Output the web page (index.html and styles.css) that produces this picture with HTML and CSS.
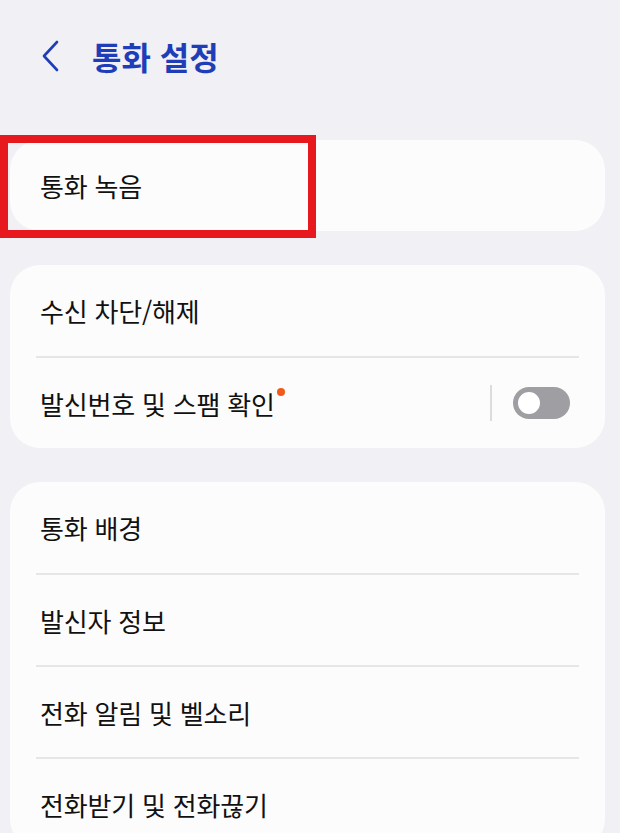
FILE: index.html
```html
<!DOCTYPE html>
<html lang="ko">
<head>
    <meta charset="UTF-8">
    <meta name="viewport" content="width=device-width, initial-scale=1.0">
    <title>통화 설정</title>
    <link rel="stylesheet" href="styles.css">
</head>
<body>
    <div class="header">
        <svg class="back" width="18" height="32" viewBox="0 0 18 32">
            <path d="M15 2 L2 16 L15 30" fill="none" stroke="#1f3db8" stroke-width="2.6" stroke-linecap="round" stroke-linejoin="round"/>
        </svg>
        <h1>통화 설정</h1>
    </div>

    <div class="cards">
        <div class="card">
            <div class="row">통화 녹음</div>
        </div>
        <div class="card">
            <div class="row">수신 차단/해제</div>
            <div class="row">
                <span class="label">발신번호 및 스팸 확인<span class="dot"></span></span>
                <span class="sep"></span>
                <span class="toggle"><span class="knob"></span></span>
            </div>
        </div>
        <div class="card">
            <div class="row">통화 배경</div>
            <div class="row">발신자 정보</div>
            <div class="row">전화 알림 및 벨소리</div>
            <div class="row">전화받기 및 전화끊기</div>
        </div>
    </div>

    <div class="highlight"></div>
</body>
</html>
```

FILE: styles.css
```css
body {
    margin: 0;
    background-color: #f0f0f5;
    font-family: "Noto Sans CJK KR", "Noto Sans", sans-serif;
    color: #111;
    overflow: hidden;
}
.header {
    display: flex;
    align-items: center;
    height: 112px;
    padding-left: 42px;
}
.header h1 {
    margin: 0 0 0 32px;
    font-size: 32px;
    font-weight: 700;
    color: #1f3db8;
    letter-spacing: 0;
}
.cards {
    display: flex;
    flex-direction: column;
    gap: 34px;
    padding: 28px 15px 0 10px;
}
.card {
    background: #fcfcfc;
    border-radius: 30px;
}
.row {
    display: flex;
    align-items: center;
    height: 91px;
    margin: 0 26px;
    padding-left: 4px;
    font-size: 26px;
    letter-spacing: -0.2px;
}
.row + .row {
    border-top: 2px solid #e6e6e8;
    height: 90px;
}
.label {
    position: relative;
    flex: 1;
}
.dot {
    position: absolute;
    top: 3px;
    width: 8px;
    height: 8px;
    margin-left: 2px;
    border-radius: 50%;
    background: #f05a1a;
}
.sep {
    width: 2px;
    height: 36px;
    background: #dcdcdc;
    margin-right: 21px;
}
.toggle {
    display: flex;
    align-items: center;
    width: 57px;
    height: 32px;
    border-radius: 16px;
    background: #9e9ea3;
    margin-right: 9px;
    padding-left: 2px;
    box-sizing: border-box;
}
.knob {
    width: 22px;
    height: 22px;
    border-radius: 50%;
    background: #fff;
    border: 3px solid #9e9ea3;
}
.highlight {
    position: absolute;
    left: 0;
    top: 135px;
    width: 300px;
    height: 87px;
    border: 8px solid #e8191e;
}
```
